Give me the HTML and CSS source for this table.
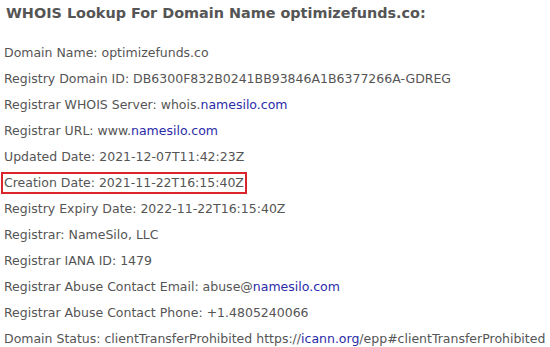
FILE: index.html
```html
<!DOCTYPE html>
<html lang="en">
<head>
    <meta charset="UTF-8">
    <meta name="viewport" content="width=device-width, initial-scale=1.0">
    <title>WHOIS Lookup</title>
    <link rel="stylesheet" href="styles.css">
</head>
<body>
    <div class="whois">
        <h3>WHOIS Lookup For Domain Name optimizefunds.co:</h3>
        <div class="record">
            <p>Domain Name: optimizefunds.co</p>
            <p>Registry Domain ID: DB6300F832B0241BB93846A1B6377266A-GDREG</p>
            <p>Registrar WHOIS Server: whois.<a href="#">namesilo.com</a></p>
            <p>Registrar URL: www.<a href="#">namesilo.com</a></p>
            <p>Updated Date: 2021-12-07T11:42:23Z</p>
            <p><span class="highlight">Creation Date: 2021-11-22T16:15:40Z</span></p>
            <p>Registry Expiry Date: 2022-11-22T16:15:40Z</p>
            <p>Registrar: NameSilo, LLC</p>
            <p>Registrar IANA ID: 1479</p>
            <p>Registrar Abuse Contact Email: abuse@<a href="#">namesilo.com</a></p>
            <p>Registrar Abuse Contact Phone: +1.4805240066</p>
            <p>Domain Status: clientTransferProhibited https://<a href="#">icann.org</a>/epp#clientTransferProhibited</p>
        </div>
    </div>
</body>
</html>
```

FILE: styles.css
```css
body { font-family: "DejaVu Sans", Verdana, sans-serif; margin: 0; background: #fff; color: #555; }
.whois { padding: 3px 4px; }
h3 { font-size: 14.4px; line-height: 20px; margin: 0 0 17px 2px; color: #555; }
.record p { font-size: 12.5px; line-height: 26px; margin: 0; white-space: nowrap; }
.record a { color: #2b2ba8; text-decoration: none; }
.highlight { display: inline-block; border: 2px solid #d9252b; line-height: 18px; padding: 0 1px; margin-left: -3px; }
```
